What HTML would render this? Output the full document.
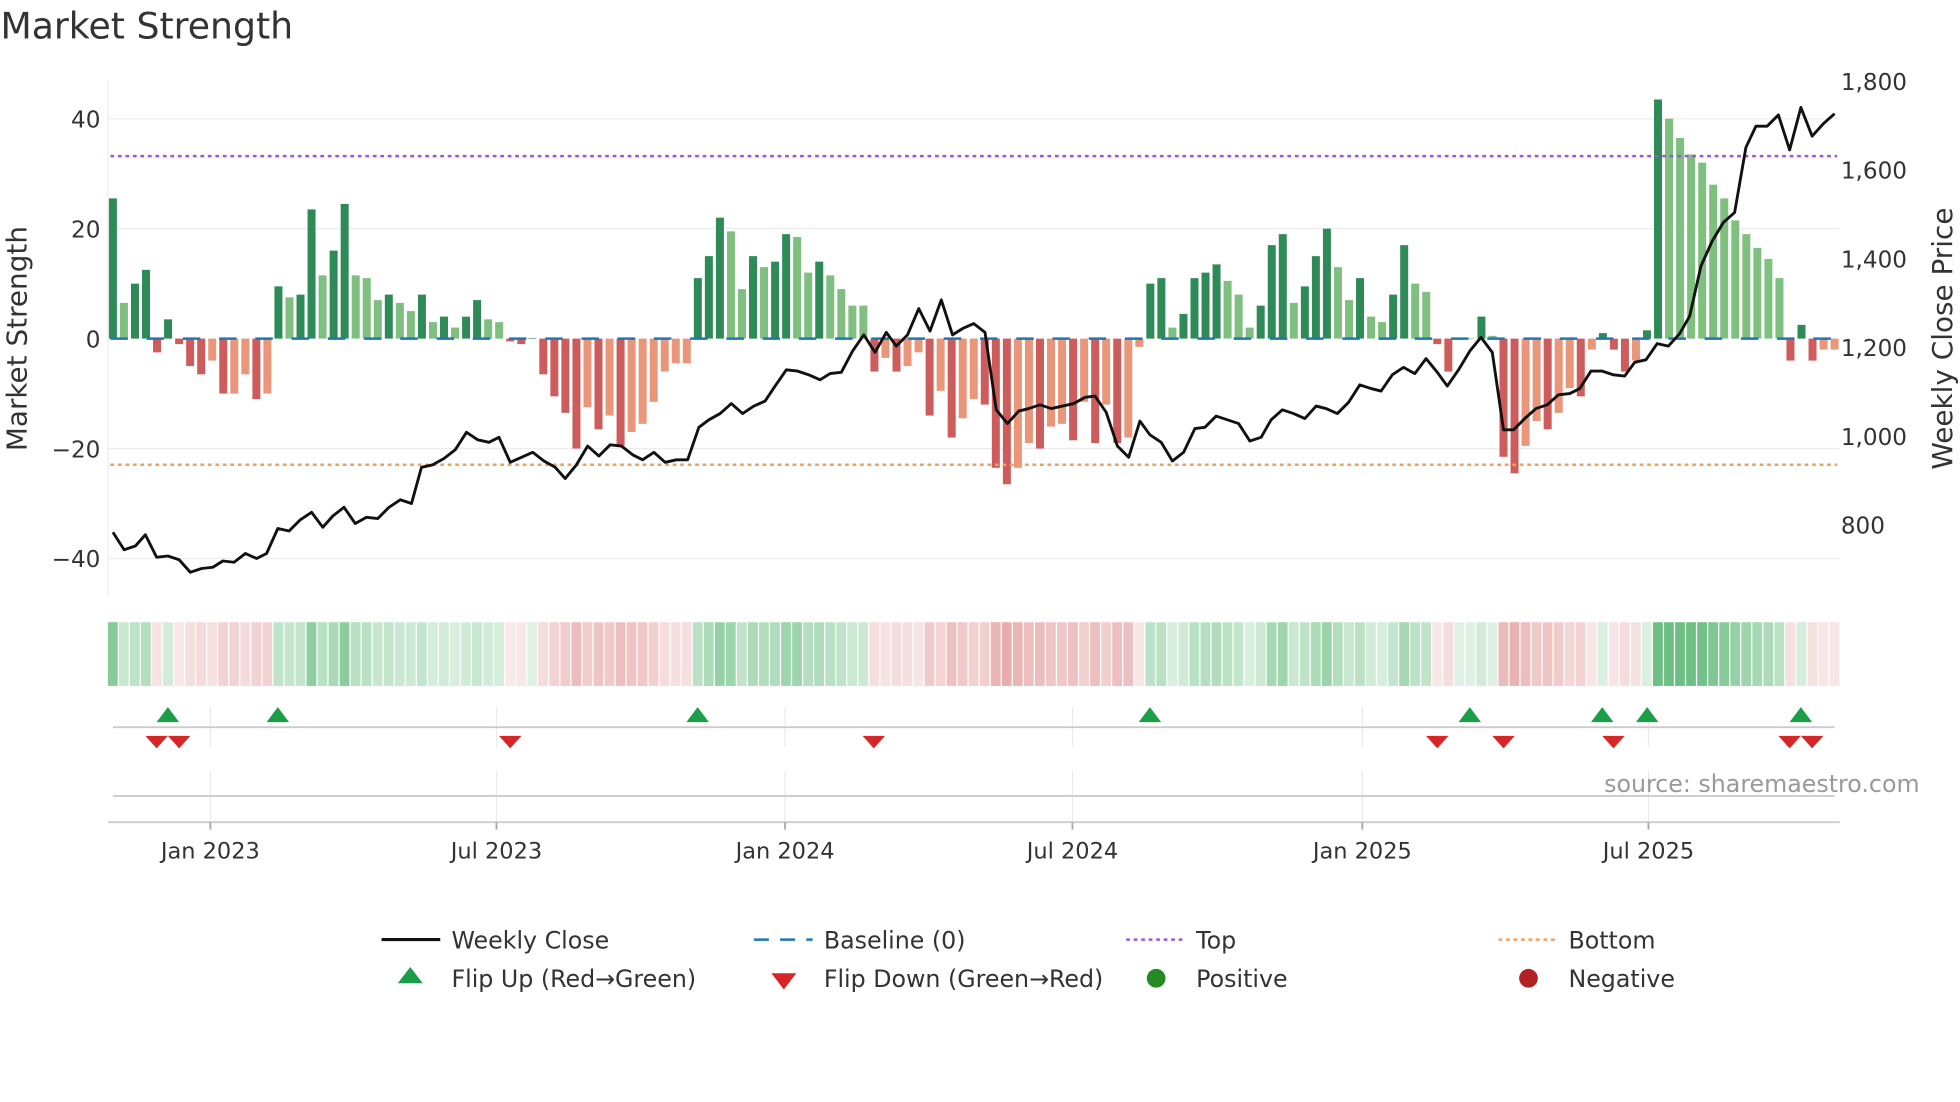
<!DOCTYPE html>
<html><head><meta charset="utf-8">
<style>
html,body{margin:0;padding:0;background:#fff;width:1960px;height:1102px;overflow:hidden}
svg{display:block}
text{font-family:"DejaVu Sans","Liberation Sans",sans-serif;fill:#333}
</style></head>
<body>
<svg id="s" width="1960" height="1102" viewBox="0 0 1568 882" xmlns="http://www.w3.org/2000/svg">
<text x="0" y="31" font-size="29">Market Strength</text>
<g stroke="#ececf0" stroke-width="1">
<line x1="86" y1="95" x2="1472" y2="95"/>
<line x1="86" y1="183" x2="1472" y2="183"/>
<line x1="86" y1="359" x2="1472" y2="359"/>
<line x1="86" y1="447" x2="1472" y2="447"/>
<line x1="86" y1="65" x2="86" y2="478"/>
</g>
<g font-size="18.5" text-anchor="end">
<text x="80" y="102">40</text>
<text x="80" y="190">20</text>
<text x="80" y="278">0</text>
<text x="80" y="366">−20</text>
<text x="80" y="454">−40</text>
</g>
<g font-size="18.5">
<text x="1473" y="72">1,800</text>
<text x="1473" y="143">1,600</text>
<text x="1473" y="214">1,400</text>
<text x="1473" y="285">1,200</text>
<text x="1473" y="356">1,000</text>
<text x="1473" y="427">800</text>
</g>
<text transform="translate(21,271) rotate(-90)" font-size="22.3" text-anchor="middle">Market Strength</text>
<text transform="translate(1562,271) rotate(-90)" font-size="22.3" text-anchor="middle">Weekly Close Price</text>
<g id="bars"></g>
<line x1="88" y1="271" x2="1470" y2="271" stroke="#1f77b4" stroke-width="2" stroke-dasharray="14,15"/>
<line x1="88" y1="125" x2="1470" y2="125" stroke="#9b59d6" stroke-width="2" stroke-dasharray="3,3"/>
<line x1="88" y1="372" x2="1470" y2="372" stroke="#f0a060" stroke-width="2" stroke-dasharray="3,3"/>
<polyline id="price" fill="none" stroke="#111" stroke-width="2.3" stroke-linejoin="round"/>
<g id="heat"></g>
<g stroke="#eaeaee" stroke-width="1">
<line x1="168" y1="566" x2="168" y2="598"/><line x1="397" y1="566" x2="397" y2="598"/><line x1="628" y1="566" x2="628" y2="598"/><line x1="858" y1="566" x2="858" y2="598"/><line x1="1090" y1="566" x2="1090" y2="598"/><line x1="1319" y1="566" x2="1319" y2="598"/>
<line x1="168" y1="617" x2="168" y2="658"/><line x1="397" y1="617" x2="397" y2="658"/><line x1="628" y1="617" x2="628" y2="658"/><line x1="858" y1="617" x2="858" y2="658"/><line x1="1090" y1="617" x2="1090" y2="658"/><line x1="1319" y1="617" x2="1319" y2="658"/>
</g>
<line x1="90" y1="582" x2="1468" y2="582" stroke="#ccc" stroke-width="1.5"/>
<line x1="90" y1="637" x2="1468" y2="637" stroke="#ccc" stroke-width="1.5"/>
<line x1="86" y1="658" x2="1472" y2="658" stroke="#ccc" stroke-width="1.5"/>
<g stroke="#aaa" stroke-width="1.5">
<line x1="168" y1="658" x2="168" y2="664"/><line x1="397" y1="658" x2="397" y2="664"/><line x1="628" y1="658" x2="628" y2="664"/><line x1="858" y1="658" x2="858" y2="664"/><line x1="1090" y1="658" x2="1090" y2="664"/><line x1="1319" y1="658" x2="1319" y2="664"/>
</g>
<g id="marks"></g>
<text x="1536" y="634" font-size="19" text-anchor="end" style="fill:#999">source: sharemaestro.com</text>
<g font-size="18" text-anchor="middle">
<text x="168" y="687">Jan 2023</text><text x="397" y="687">Jul 2023</text><text x="628" y="687">Jan 2024</text><text x="858" y="687">Jul 2024</text><text x="1090" y="687">Jan 2025</text><text x="1319" y="687">Jul 2025</text>
</g>
<g font-size="19">
<line x1="305" y1="752" x2="352" y2="752" stroke="#111" stroke-width="2.5"/>
<text x="361" y="759">Weekly Close</text>
<line x1="603" y1="752" x2="650" y2="752" stroke="#1f77b4" stroke-width="2" stroke-dasharray="12,9"/>
<text x="659" y="759">Baseline (0)</text>
<line x1="901" y1="752" x2="946" y2="752" stroke="#9b59d6" stroke-width="2" stroke-dasharray="3,3"/>
<text x="957" y="759">Top</text>
<line x1="1199" y1="752" x2="1244" y2="752" stroke="#f0a060" stroke-width="2" stroke-dasharray="3,3"/>
<text x="1255" y="759">Bottom</text>
<polygon points="328,774 338,787 318,787" fill="#1a9e48"/>
<text x="361" y="790">Flip Up (Red→Green)</text>
<polygon points="617,779 637,779 627,792" fill="#d62728"/>
<text x="659" y="790">Flip Down (Green→Red)</text>
<circle cx="925" cy="783" r="7.5" fill="#228b22"/>
<text x="957" y="790">Positive</text>
<circle cx="1223" cy="783" r="7.5" fill="#b22222"/>
<text x="1255" y="790">Negative</text>
</g>
</svg>
<script>
var v=[25.5,6.5,10,12.5,-2.5,3.5,-1,-5,-6.5,-4,-10,-10,-6.5,-11,-10,9.5,7.5,8,23.5,11.5,16,24.5,11.5,11,7,8,6.5,5,8,3,4,2,4,7,3.5,3,-0.5,-1,0,-6.5,-10.5,-13.5,-20,-12.5,-16.5,-14,-19.5,-17,-15.5,-11.5,-6,-4.5,-4.5,11,15,22,19.5,9,15,13,14,19,18.5,12,14,11.5,9,6,6,-6,-3.5,-6,-5,-2.5,-14,-9.5,-18,-14.5,-11,-12,-23.5,-26.5,-23.5,-19,-20,-16,-15.5,-18.5,-11.5,-19,-12,-19,-18,-1.5,10,11,2,4.5,11,12,13.5,10.5,8,2,6,17,19,6.5,9.5,15,20,13,7,11,4,3,8,17,10,8.5,-1,-6,0,0,4,0.5,-21.5,-24.5,-19.5,-15,-16.5,-13.5,-9,-10.5,-2,1,-2,-6,-4,1.5,43.5,40,36.5,33.5,32,28,25.5,21.5,19,16.5,14.5,11,-4,2.5,-4,-2,-2];
var NS="http://www.w3.org/2000/svg",n=v.length,dx=(1468-90)/(n-1);
function el(t,a,p){var e=document.createElementNS(NS,t);for(var k in a)e.setAttribute(k,a[k]);p.appendChild(e);return e;}
var bars=document.getElementById('bars'),heat=document.getElementById('heat');
for(var i=0;i<n;i++){var x=90+dx*i,val=v[i],prev=i?v[i-1]:0;
 var up=val>prev, c;
 if(val>=0) c=up?'#2e8b57':'#7fbf7f'; else c=(val<prev)?'#cd5c5c':'#e9967a';
 var h=Math.abs(val)*4.4; if(h<0.5)h=0.5;
 el('rect',{x:x-3.2,y:val>=0?271-h:271,width:6.4,height:h,fill:c},bars);
 var a=Math.min(1,0.22+Math.abs(val)/30*0.7), col;
 if(val>=0) col='rgba(60,170,90,'+(a*0.75)+')'; else col='rgba(205,80,80,'+(a*0.55)+')';
 el('rect',{x:x-4,y:498,width:dx-1,height:51,fill:col},heat);
}
var p=[[90,426],[99,440],[108,437],[116,428],[125,446],[134,445],[143,448],[152,458],[161,455],[170,454],[178,449],[187,450],[196,443],[205,447],[213,443],[222,423],[231,425],[240,416],[249,410],[258,422],[266,413],[275,406],[284,419],[293,414],[302,415],[311,406],[320,400],[329,403],[337,374],[346,372],[355,367],[364,360],[373,346],[382,352],[391,354],[399,350],[408,370],[417,366],[426,362],[435,369],[444,374],[452,383],[461,372],[470,357],[479,365],[488,356],[497,357],[506,364],[514,368],[523,362],[532,370],[541,368],[550,368],[559,342],[567,336],[576,331],[585,323],[594,331],[603,325],[612,321],[620,309],[629,296],[638,297],[647,300],[656,304],[664,299],[673,298],[682,281],[691,268],[700,282],[709,266],[717,277],[726,268],[735,247],[744,265],[753,240],[762,268],[770,263],[779,259],[788,266],[797,328],[806,339],[815,329],[823,327],[832,324],[841,327],[850,325],[859,323],[868,318],[876,317],[885,330],[894,357],[903,366],[912,337],[920,348],[929,354],[938,369],[947,362],[956,343],[964,342],[973,333],[982,336],[991,339],[1000,353],[1009,350],[1017,336],[1026,328],[1035,331],[1044,335],[1053,325],[1061,327],[1070,331],[1079,322],[1088,308],[1097,311],[1105,313],[1114,300],[1123,294],[1132,299],[1141,287],[1150,298],[1158,309],[1167,296],[1176,281],[1185,270],[1194,282],[1203,344],[1211,344],[1220,335],[1229,327],[1238,324],[1247,316],[1256,315],[1264,311],[1273,297],[1282,297],[1291,300],[1300,301],[1308,290],[1317,288],[1326,275],[1335,277],[1344,267],[1352,253],[1361,213],[1370,193],[1379,178],[1388,170],[1397,118],[1405,101],[1414,101],[1423,92],[1432,120],[1441,86],[1450,109],[1459,99],[1468,91]];
document.getElementById('price').setAttribute('points',p.map(function(q){return q.join(',')}).join(' '));
var m=document.getElementById('marks');
[134,222,558,920,1176,1282,1318,1441].forEach(function(x){el('polygon',{points:(x)+',566 '+(x+9)+',578 '+(x-9)+',578',fill:'#1a9e48'},m);});
[125,143,408,699,1150,1203,1291,1432,1450].forEach(function(x){el('polygon',{points:(x-9)+',589 '+(x+9)+',589 '+x+',599',fill:'#d62728'},m);});
</script>
</body></html>
